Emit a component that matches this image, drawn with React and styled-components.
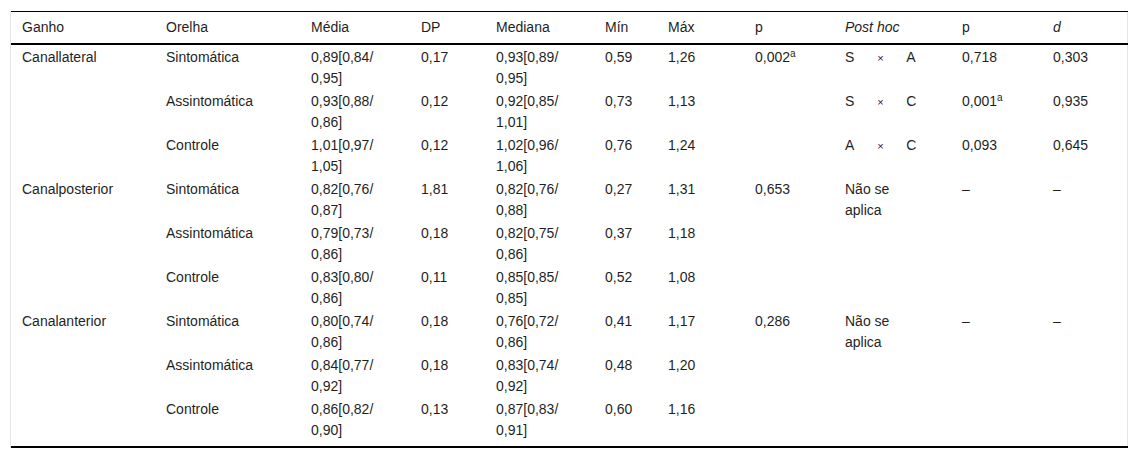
import styled, { createGlobalStyle } from "styled-components"

const Global = createGlobalStyle`
    body{
        margin: 0;
        background: #fff;
        font-family: "Liberation Sans", Arial, sans-serif;
        color: #1f1f1f;
    }
`

const Frame = styled.div`
    margin: 11px 0 0 10px;
    width: 1116px;
    border-left: 1px solid #e4e4e4;
    border-right: 1px solid #e4e4e4;
`

const Table = styled.table`
    width: 100%;
    border-collapse: collapse;
    table-layout: fixed;
    font-size: 14px;
    line-height: 21px;
    border-top: 1px solid #000;
    border-bottom: 2px solid #000;
`

const Th = styled.th`
    text-align: left;
    font-weight: normal;
    font-style: ${props => props.$italic ? "italic" : "normal"};
    padding: 5px 12px 5px 11px;
    border-bottom: 2px solid #000;
    vertical-align: top;
`

const Td = styled.td`
    padding: 2px 12px 0 11px;
    vertical-align: top;
    white-space: nowrap;
`

const LastRow = styled.tr`
    td{
        padding-bottom: 5px;
    }
`

const Sup = styled.sup`
    font-size: 10px;
    line-height: 0;
    vertical-align: 5px;
`

const Pair = styled.span`
    display: inline-flex;
    align-items: baseline;
    span:nth-child(2){
        font-size: 11px;
        width: 26px;
        text-align: center;
        margin: 0 13px;
    }
`

const widths = [144, 145, 110, 75, 109, 63, 87, 90, 117, 91, 86]
const heads = ["Ganho", "Orelha", "Média", "DP", "Mediana", "Mín", "Máx", "p", "Post hoc", "p", "d"]

const rows = [
    { g: "Canallateral", o: "Sintomática", m: ["0,89[0,84/", "0,95]"], dp: "0,17", md: ["0,93[0,89/", "0,95]"], min: "0,59", max: "1,26", p: "0,002", ps: true, ph: ["S", "A"], p2: "0,718", d: "0,303" },
    { o: "Assintomática", m: ["0,93[0,88/", "0,86]"], dp: "0,12", md: ["0,92[0,85/", "1,01]"], min: "0,73", max: "1,13", ph: ["S", "C"], p2: "0,001", p2s: true, d: "0,935" },
    { o: "Controle", m: ["1,01[0,97/", "1,05]"], dp: "0,12", md: ["1,02[0,96/", "1,06]"], min: "0,76", max: "1,24", ph: ["A", "C"], p2: "0,093", d: "0,645" },
    { g: "Canalposterior", o: "Sintomática", m: ["0,82[0,76/", "0,87]"], dp: "1,81", md: ["0,82[0,76/", "0,88]"], min: "0,27", max: "1,31", p: "0,653", na: true, p2: "–", d: "–" },
    { o: "Assintomática", m: ["0,79[0,73/", "0,86]"], dp: "0,18", md: ["0,82[0,75/", "0,86]"], min: "0,37", max: "1,18" },
    { o: "Controle", m: ["0,83[0,80/", "0,86]"], dp: "0,11", md: ["0,85[0,85/", "0,85]"], min: "0,52", max: "1,08" },
    { g: "Canalanterior", o: "Sintomática", m: ["0,80[0,74/", "0,86]"], dp: "0,18", md: ["0,76[0,72/", "0,86]"], min: "0,41", max: "1,17", p: "0,286", na: true, p2: "–", d: "–" },
    { o: "Assintomática", m: ["0,84[0,77/", "0,92]"], dp: "0,18", md: ["0,83[0,74/", "0,92]"], min: "0,48", max: "1,20" },
    { o: "Controle", m: ["0,86[0,82/", "0,90]"], dp: "0,13", md: ["0,87[0,83/", "0,91]"], min: "0,60", max: "1,16" },
]

const Cells = ({ r }) => <>
    <Td>{r.g}</Td>
    <Td>{r.o}</Td>
    <Td>{r.m[0]}<br />{r.m[1]}</Td>
    <Td>{r.dp}</Td>
    <Td>{r.md[0]}<br />{r.md[1]}</Td>
    <Td>{r.min}</Td>
    <Td>{r.max}</Td>
    <Td>{r.p}{r.ps && <Sup>a</Sup>}</Td>
    <Td>
        {r.ph && <Pair><span>{r.ph[0]}</span><span>×</span><span>{r.ph[1]}</span></Pair>}
        {r.na && <>Não se<br />aplica</>}
    </Td>
    <Td>{r.p2}{r.p2s && <Sup>a</Sup>}</Td>
    <Td>{r.d}</Td>
</>

const App = () => {
    return <>
        <Global />
        <Frame>
            <Table>
                <colgroup>
                    {widths.map((w, i) => <col key={i} style={{ width: w }} />)}
                </colgroup>
                <thead>
                    <tr>
                        {heads.map((h, i) => <Th key={i} $italic={h === "Post hoc" || h === "d"}>{h}</Th>)}
                    </tr>
                </thead>
                <tbody>
                    {rows.map((r, i) => i === rows.length - 1
                        ? <LastRow key={i}><Cells r={r} /></LastRow>
                        : <tr key={i}><Cells r={r} /></tr>)}
                </tbody>
            </Table>
        </Frame>
    </>
}

export default App
